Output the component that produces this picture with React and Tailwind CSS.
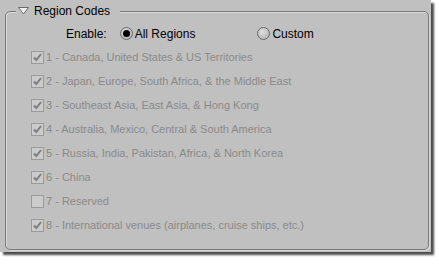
import React from "react";

const rows = [
  { n: "1 - Canada, United States & US Territories", c: true },
  { n: "2 - Japan, Europe, South Africa, & the Middle East", c: true },
  { n: "3 - Southeast Asia, East Asia, & Hong Kong", c: true },
  { n: "4 - Australia, Mexico, Central & South America", c: true },
  { n: "5 - Russia, India, Pakistan, Africa, & North Korea", c: true },
  { n: "6 - China", c: true },
  { n: "7 - Reserved", c: false },
  { n: "8 - International venues (airplanes, cruise ships, etc.)", c: true },
];

function Check({ checked }) {
  return (
    <div className="w-[13px] h-[13px] border border-[#9a9a9a] bg-[#cbcbcb] flex items-center justify-center shrink-0">
      {checked && (
        <svg width="11" height="11" viewBox="0 0 11 11">
          <path d="M2 5.5 L4.3 8 L9 2" fill="none" stroke="#7c7c7c" strokeWidth="2" />
        </svg>
      )}
    </div>
  );
}

function Radio({ on }) {
  return (
    <div className="w-[13px] h-[13px] rounded-full border border-[#6a6a6a] bg-[radial-gradient(circle_at_40%_35%,#e0e0e0,#a8a8a8)] flex items-center justify-center shrink-0">
      {on && <div className="w-[7px] h-[7px] rounded-full bg-black" />}
    </div>
  );
}

export default function App() {
  return (
    <div className="w-[439px] h-[264px] bg-white" style={{ fontFamily: "'Liberation Sans', Arial, sans-serif" }}>
      <div className="w-[431px] h-[252px] bg-[#c0c0c0] shadow-[3px_3px_2px_rgba(0,0,0,0.7)] pt-[11px] pl-[5px]">
        <div className="relative w-[424px] h-[239px] border border-[#7a7a7a] rounded-[5px] shadow-[inset_1px_1px_0_#d8d8d8,1px_1px_0_#d8d8d8]">
          <div className="absolute left-[10px] top-[-9px] flex items-center gap-[5px] bg-[#c0c0c0] pl-[2px] pr-[10px] h-[16px]">
            <svg width="11" height="8" viewBox="0 0 11 8">
              <path d="M0.5 0.5 L10.5 0.5 L5.5 7 Z" fill="#f0f0f0" stroke="#6a6a6a" strokeWidth="1" />
            </svg>
            <span className="text-[12px] text-black leading-none">Region Codes</span>
          </div>
          <div className="flex items-center pt-[15px] text-[12px] leading-none text-black">
            <span className="ml-[60px]">Enable:</span>
            <div className="ml-[13px] flex items-center gap-[2px]">
              <Radio on />
              <span>All Regions</span>
            </div>
            <div className="ml-[62px] flex items-center gap-[2px]">
              <Radio />
              <span>Custom</span>
            </div>
          </div>
          <div className="flex flex-col gap-[11px] pl-[25px] pt-[11px]">
            {rows.map((r) => (
              <div key={r.n} className="flex items-center gap-[2px] h-[13px]">
                <Check checked={r.c} />
                <span className="text-[11px] leading-none text-[#8a8a8a] whitespace-nowrap">{r.n}</span>
              </div>
            ))}
          </div>
        </div>
      </div>
    </div>
  );
}
